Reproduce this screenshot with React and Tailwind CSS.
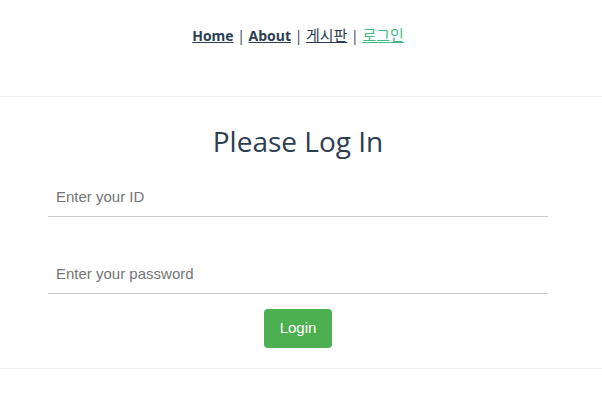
import React, { useState } from 'react';

const Nav = () => (
  <nav className="h-[97px] border-b border-[#eeeeee] pt-[23px] pr-[6px] text-center text-[14px] leading-[24px] text-[#2c3e50] font-['Open_Sans','Noto_Sans_CJK_KR',sans-serif]">
    <a href="#" className="font-bold underline">Home</a>
    {' | '}
    <a href="#" className="font-bold underline">About</a>
    {' | '}
    <a href="#" className="underline text-[15px]">게시판</a>
    {' | '}
    <a href="#" className="underline text-[15px] text-[#42b983]">로그인</a>
  </nav>
);

const LoginForm = () => {
  const [id, setId] = useState('');
  const [pw, setPw] = useState('');

  return (
    <div className="border-b border-[#eeeeee] h-[272px] pr-[6px] flex flex-col items-center">
      <h2 className="mt-[24px] text-[28px] leading-[40px] text-[#2c3e50] font-['Open_Sans',sans-serif]">Please Log In</h2>
      <input
        value={id}
        onChange={(e) => setId(e.target.value)}
        placeholder="Enter your ID"
        className="mt-[16px] w-[500px] h-[40px] px-[8px] border-b border-[#cccccc] outline-none text-[15px] font-['Liberation_Sans',Arial,sans-serif] placeholder:text-[#757575]"
      />
      <input
        type="password"
        value={pw}
        onChange={(e) => setPw(e.target.value)}
        placeholder="Enter your password"
        className="mt-[37px] w-[500px] h-[40px] px-[8px] border-b border-[#cccccc] outline-none text-[15px] font-['Liberation_Sans',Arial,sans-serif] placeholder:text-[#757575]"
      />
      <button className="mt-[15px] w-[68px] h-[39px] rounded-[4px] bg-[#4caf50] text-white text-[15px] font-['Liberation_Sans',Arial,sans-serif]">
        Login
      </button>
    </div>
  );
};

export default function App() {
  return (
    <div className="bg-white min-h-[408px]">
      <Nav />
      <LoginForm />
    </div>
  );
}
